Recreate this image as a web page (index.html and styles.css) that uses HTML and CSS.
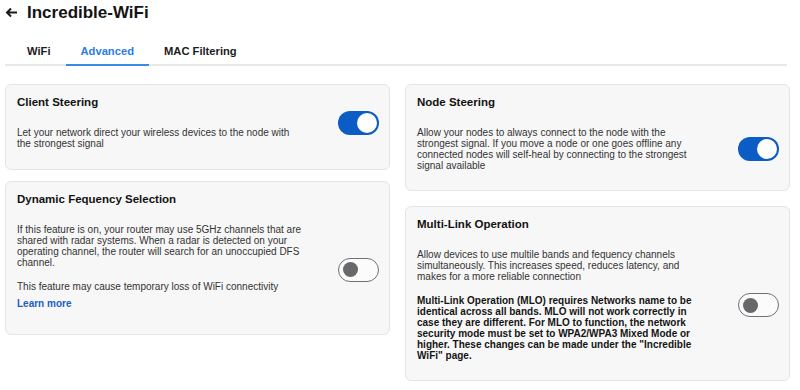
FILE: index.html
```html
<!DOCTYPE html>
<html lang="en">
<head>
    <meta charset="UTF-8">
    <meta name="viewport" content="width=device-width, initial-scale=1.0">
    <title>Incredible-WiFi</title>
    <link rel="stylesheet" href="styles.css">
</head>
<body>
    <div class="page">
        <header class="top-bar">
            <svg class="back-icon" width="13" height="11" viewBox="0 0 13 11" aria-hidden="true">
                <path d="M12 5.5H2M6 1.5L2 5.5L6 9.5" fill="none" stroke="#1b1b1b" stroke-width="2"/>
            </svg>
            <h1>Incredible-WiFi</h1>
        </header>

        <nav class="tabs">
            <a class="tab">WiFi</a>
            <a class="tab active">Advanced</a>
            <a class="tab">MAC Filtering</a>
        </nav>

        <div class="columns">
            <div class="column column-left">
                <section class="card card-short">
                    <div class="card-row">
                        <div class="card-text">
                            <h2 class="card-title">Client Steering</h2>
                            <p>Let your network direct your wireless devices to the node with the strongest signal</p>
                        </div>
                        <span class="toggle on"><span class="knob"></span></span>
                    </div>
                </section>

                <section class="card">
                    <h2 class="card-title">Dynamic Fequency Selection</h2>
                    <div class="card-row">
                        <div class="card-text">
                            <p>If this feature is on, your router may use 5GHz channels that are shared with radar systems. When a radar is detected on your operating channel, the router will search for an unoccupied DFS channel.</p>
                            <p class="spaced">This feature may cause temporary loss of WiFi connectivity</p>
                            <a class="learn-more">Learn more</a>
                        </div>
                        <span class="toggle off"><span class="knob"></span></span>
                    </div>
                </section>
            </div>

            <div class="column column-right">
                <section class="card">
                    <h2 class="card-title">Node Steering</h2>
                    <div class="card-row">
                        <div class="card-text">
                            <p>Allow your nodes to always connect to the node with the strongest signal. If you move a node or one goes offline any connected nodes will self-heal by connecting to the strongest signal available</p>
                        </div>
                        <span class="toggle on"><span class="knob"></span></span>
                    </div>
                </section>

                <section class="card">
                    <h2 class="card-title">Multi-Link Operation</h2>
                    <div class="card-row">
                        <div class="card-text">
                            <p>Allow devices to use multile bands and fequency channels simultaneously. This increases speed, reduces latency, and makes for a more reliable connection</p>
                            <p class="spaced strong">Multi-Link Operation (MLO) requires Networks name to be identical across all bands. MLO will not work correctly in case they are different. For MLO to function, the network security mode must be set to WPA2/WPA3 Mixed Mode or higher. These changes can be made under the "Incredible WiFi" page.</p>
                        </div>
                        <span class="toggle off"><span class="knob"></span></span>
                    </div>
                </section>
            </div>
        </div>
    </div>
</body>
</html>
```

FILE: styles.css
```css
body {
    margin: 0;
    background: #ffffff;
    font-family: 'Liberation Sans', Arial, sans-serif;
    color: #333333;
}

.page {
    padding: 0 10px 0 5px;
}

/* header */
.top-bar {
    display: flex;
    align-items: center;
    gap: 9px;
    padding-top: 3px;
}

.back-icon {
    display: block;
}

.top-bar h1 {
    margin: 0;
    font-size: 17px;
    line-height: 19px;
    font-weight: bold;
    color: #141414;
}

/* tabs */
.tabs {
    display: flex;
    margin: 23px 3px 0 0;
    padding-left: 7px;
    border-bottom: 2px solid #e8e8e8;
}

.tab {
    padding: 0 15px 6px;
    margin-bottom: -2px;
    border-bottom: 2px solid transparent;
    font-size: 11.2px;
    line-height: 13px;
    font-weight: bold;
    color: #1c1c1c;
}

.tab.active {
    color: #2a7ce6;
    border-bottom-color: #3a88e8;
}

/* cards */
.columns {
    display: flex;
    gap: 15px;
    margin-top: 18px;
}

.column {
    flex: 1;
    display: flex;
    flex-direction: column;
}

.column-left {
    gap: 11px;
}

.column-right {
    gap: 15px;
}

.card {
    background: #f7f7f7;
    border: 1px solid #e5e5e5;
    border-radius: 6px;
    padding: 11px 10px 19px 11px;
}

.card-short {
    min-height: 54px;
}

.card-title {
    margin: 0 0 18px;
    font-size: 11.5px;
    line-height: 13px;
    font-weight: bold;
    color: #121212;
}

.card-row {
    display: flex;
    align-items: center;
    justify-content: space-between;
}

.card-text {
    width: 287px;
}

.card-text p {
    margin: 0;
    font-size: 10px;
    line-height: 11px;
    color: #333333;
}

.card-text p.spaced {
    margin-top: 13px;
}

.card-text p.strong {
    font-weight: bold;
    color: #141414;
}

.learn-more {
    display: block;
    margin-top: 6px;
    padding-bottom: 6px;
    font-size: 10px;
    line-height: 11px;
    font-weight: bold;
    color: #1b5fc1;
}

/* toggles */
.toggle {
    flex-shrink: 0;
    display: flex;
    align-items: center;
    width: 41px;
    height: 24px;
    border-radius: 12px;
    box-sizing: border-box;
}

.toggle.on {
    background: #0b5cc4;
    justify-content: flex-end;
    padding: 0 2px;
}

.toggle.on .knob {
    width: 20px;
    height: 20px;
    border-radius: 50%;
    background: #ffffff;
}

.toggle.off {
    background: #fbfbfb;
    border: 1.5px solid #707070;
    padding: 0 4px;
}

.toggle.off .knob {
    width: 15px;
    height: 15px;
    border-radius: 50%;
    background: #68686c;
}
```
